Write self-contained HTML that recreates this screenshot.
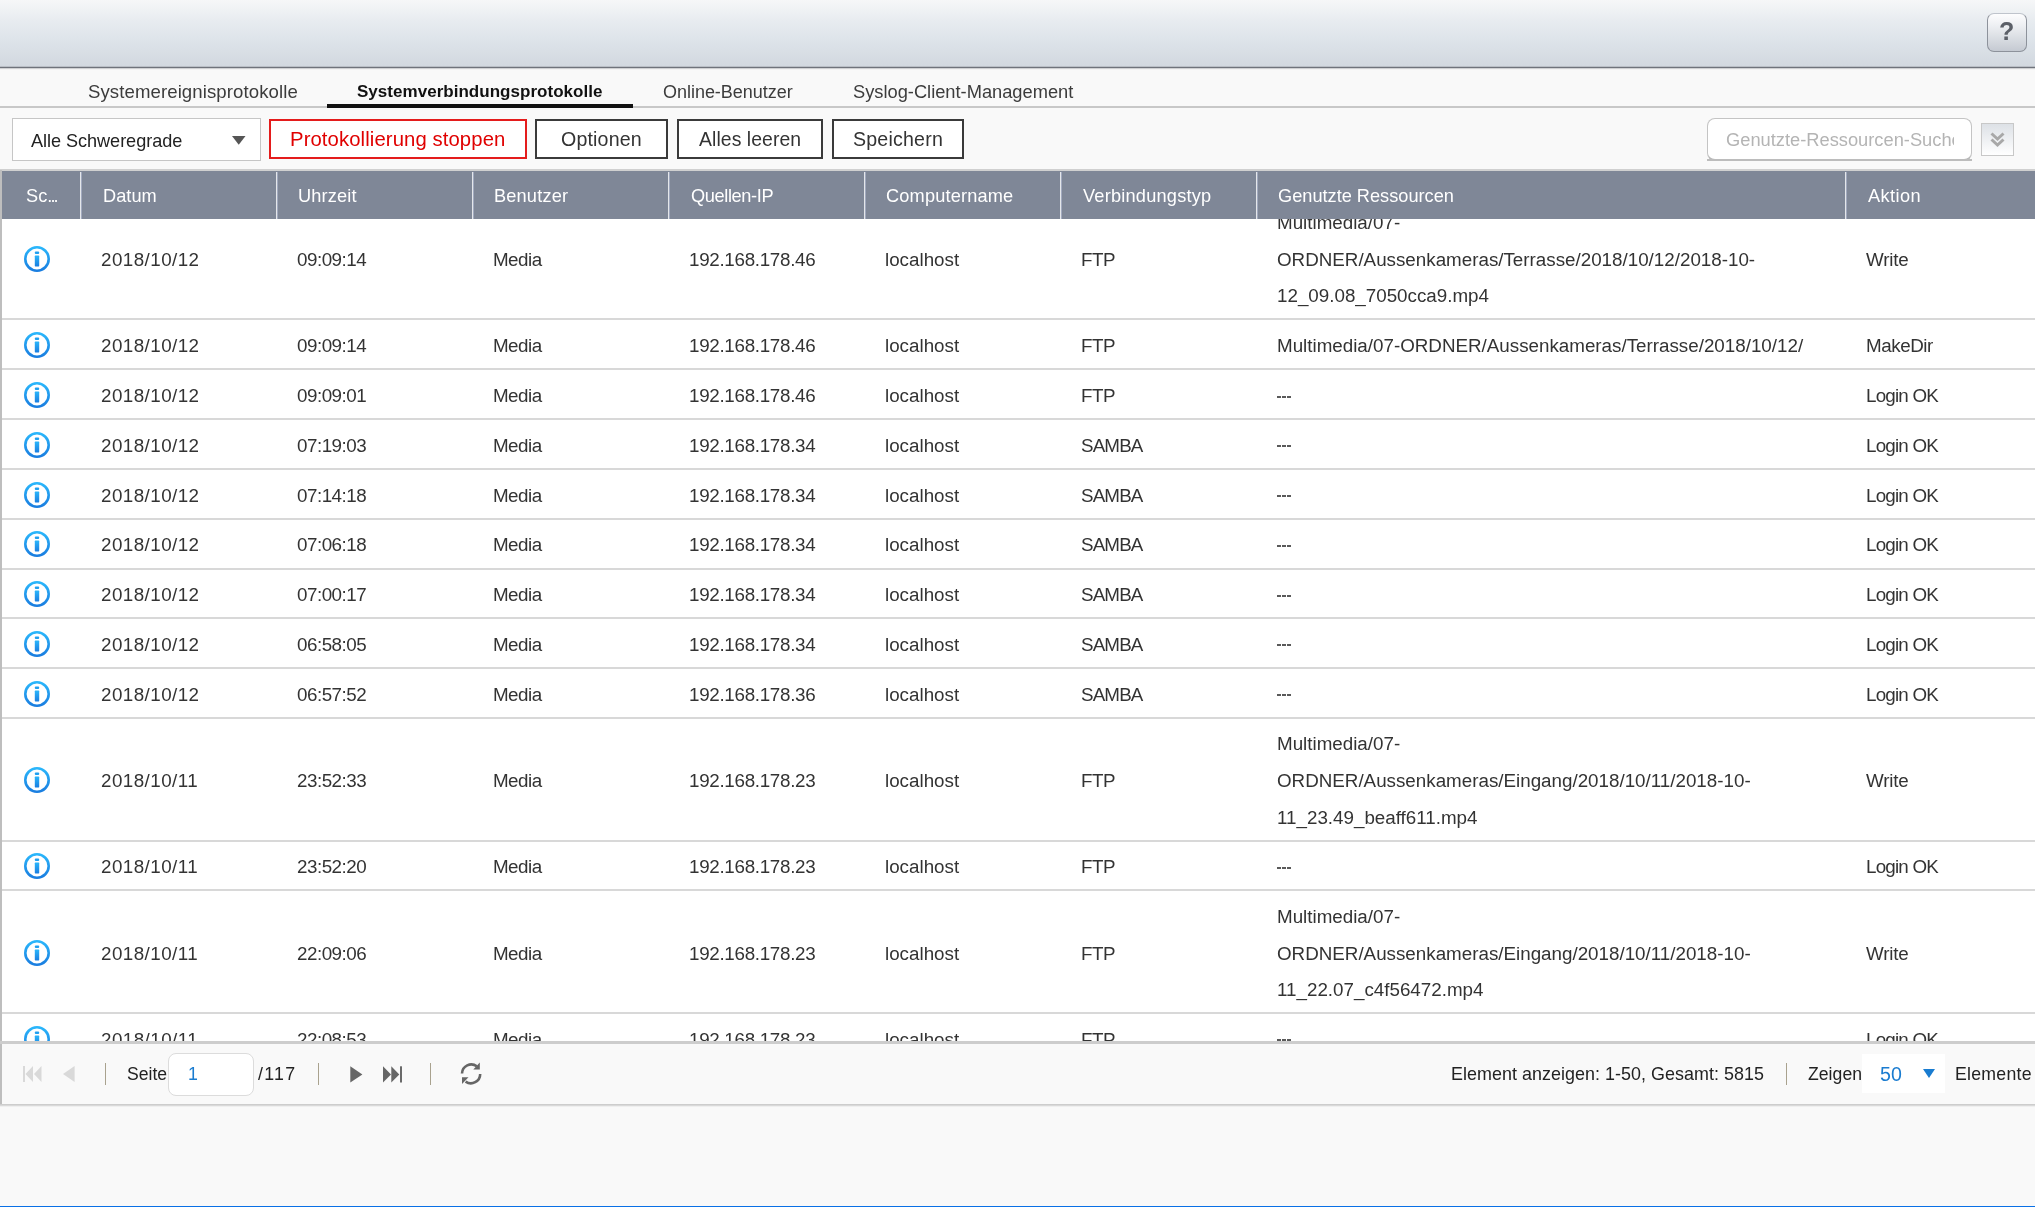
<!DOCTYPE html>
<html><head><meta charset="utf-8"><style>
*{box-sizing:border-box;margin:0;padding:0}
html,body{width:2035px;height:1207px;overflow:hidden;background:#f9f9f9;font-family:"Liberation Sans",sans-serif;color:#333}
.a{position:absolute}
.t{position:absolute;white-space:nowrap;will-change:transform}
svg{position:absolute;overflow:visible}
</style></head><body>
<div class="a" style="left:0px;top:0px;width:2035px;height:67px;background:linear-gradient(#f6f7f8,#e8ecf0 30%,#dfe5eb 55%,#d2d8df)"></div>
<div class="a" style="left:0px;top:66px;width:2035px;height:1px;background:#b9bec5"></div>
<div class="a" style="left:0px;top:67px;width:2035px;height:1px;background:#6f737b"></div>
<div class="a" style="left:0px;top:68px;width:2035px;height:1px;background:#cfd0d2"></div>
<div class="a" style="left:0px;top:69px;width:2035px;height:1px;background:#f3f3f3"></div>
<div class="a" style="left:1987px;top:13px;width:40px;height:39px;border:1.5px solid #8d929b;border-top-color:#bfc4cc;border-radius:7px;background:linear-gradient(#fdfdfe,#eef0f3 30%,#c5cad2)"></div>
<div class="t" id="help" style="left:1999.30px;top:16.34px;font-size:25px;line-height:30px;color:#5c6068;font-weight:bold;">?</div>
<div class="a" style="left:0px;top:106px;width:2035px;height:2px;background:#c8c8c8"></div>
<div class="a" style="left:327px;top:104px;width:306px;height:4px;background:#111"></div>
<div class="t" id="tab1" style="left:87.90px;top:80.66px;font-size:18.6px;line-height:22px;color:#3c3c3c;letter-spacing:0.087px;">Systemereignisprotokolle</div>
<div class="t" id="tab2" style="left:357.10px;top:82.21px;font-size:17.0px;line-height:20px;color:#111;font-weight:bold;letter-spacing:0.031px;">Systemverbindungsprotokolle</div>
<div class="t" id="tab3" style="left:663.10px;top:80.86px;font-size:18.0px;line-height:22px;color:#3c3c3c;letter-spacing:-0.029px;">Online-Benutzer</div>
<div class="t" id="tab4" style="left:852.80px;top:80.76px;font-size:18.3px;line-height:22px;color:#3c3c3c;letter-spacing:-0.009px;">Syslog-Client-Management</div>
<div class="a" style="left:12px;top:118px;width:249px;height:43px;border:1.5px solid #c6c6c6;background:#fff"></div>
<div class="t" id="sev" style="left:31.20px;top:130.13px;font-size:18.1px;line-height:22px;color:#222;letter-spacing:-0.038px;">Alle Schweregrade</div>
<svg style="left:232px;top:136px" width="14" height="9"><path d="M0 0H13.5L6.75 8.7Z" fill="#555"/></svg>
<div class="a" style="left:269px;top:119px;width:258px;height:40px;border:2px solid #e41c1c;background:#fff"></div>
<div class="t" id="b1" style="left:290.00px;top:126.97px;font-size:20.3px;line-height:24px;color:#e00000;letter-spacing:0.100px;">Protokollierung stoppen</div>
<div class="a" style="left:535px;top:119px;width:133px;height:40px;border:2px solid #3a3a3a;background:#fff"></div>
<div class="t" id="b2" style="left:561.40px;top:127.21px;font-size:19.6px;line-height:24px;color:#333;letter-spacing:0.171px;">Optionen</div>
<div class="a" style="left:677px;top:119px;width:146px;height:40px;border:2px solid #3a3a3a;background:#fff"></div>
<div class="t" id="b3" style="left:699.00px;top:127.78px;font-size:19.4px;line-height:23px;color:#333;letter-spacing:0.073px;">Alles leeren</div>
<div class="a" style="left:832px;top:119px;width:132px;height:40px;border:2px solid #3a3a3a;background:#fff"></div>
<div class="t" id="b4" style="left:853.10px;top:127.21px;font-size:19.6px;line-height:24px;color:#333;letter-spacing:0.200px;">Speichern</div>
<div class="a" style="left:1707px;top:118px;width:265px;height:43px;border:1.5px solid #c4c4c4;border-bottom:2px solid #b8b8b8;border-radius:8px;background:#fff"></div>
<div class="a" style="left:1707px;top:159px;width:265px;height:2px;background:#bcbcbc"></div>
<div class="a" style="left:1709px;top:120px;width:245px;height:38px;overflow:hidden"><div class="t" id="srch" style="left:16.50px;top:9.16px;font-size:18.3px;line-height:22px;color:#b4b4b4;">Genutzte-Ressourcen-Suche</div>
</div>
<div class="a" style="left:1981px;top:123px;width:33px;height:33px;border:1.5px solid #c8c8c8;background:linear-gradient(#dde1e6,#fff)"></div>
<svg style="left:1987px;top:129px" width="22" height="22"><path d="M4.5 4.5L10.5 10L16.5 4.5M4.5 10.5L10.5 16L16.5 10.5" fill="none" stroke="#a8a8a8" stroke-width="3"/></svg>
<div class="a" style="left:0px;top:169px;width:2035px;height:2px;background:#d0d0d0"></div>
<div class="a" style="left:0px;top:171px;width:2035px;height:872px;background:#fff"></div>
<div class="a" style="left:0px;top:171px;width:2035px;height:48px;background:#7f8797"></div>
<div class="a" style="left:80px;top:172px;width:1px;height:47px;background:#e4e6ea"></div>
<div class="a" style="left:81px;top:172px;width:1px;height:47px;background:#a2aabf"></div>
<div class="a" style="left:276px;top:172px;width:1px;height:47px;background:#e4e6ea"></div>
<div class="a" style="left:277px;top:172px;width:1px;height:47px;background:#a2aabf"></div>
<div class="a" style="left:472px;top:172px;width:1px;height:47px;background:#e4e6ea"></div>
<div class="a" style="left:473px;top:172px;width:1px;height:47px;background:#a2aabf"></div>
<div class="a" style="left:668px;top:172px;width:1px;height:47px;background:#e4e6ea"></div>
<div class="a" style="left:669px;top:172px;width:1px;height:47px;background:#a2aabf"></div>
<div class="a" style="left:864px;top:172px;width:1px;height:47px;background:#e4e6ea"></div>
<div class="a" style="left:865px;top:172px;width:1px;height:47px;background:#a2aabf"></div>
<div class="a" style="left:1060px;top:172px;width:1px;height:47px;background:#e4e6ea"></div>
<div class="a" style="left:1061px;top:172px;width:1px;height:47px;background:#a2aabf"></div>
<div class="a" style="left:1256px;top:172px;width:1px;height:47px;background:#e4e6ea"></div>
<div class="a" style="left:1257px;top:172px;width:1px;height:47px;background:#a2aabf"></div>
<div class="a" style="left:1845px;top:172px;width:1px;height:47px;background:#e4e6ea"></div>
<div class="a" style="left:1846px;top:172px;width:1px;height:47px;background:#a2aabf"></div>
<div class="t" id="h0" style="left:25.70px;top:185.39px;font-size:18.2px;line-height:22px;color:#fff;">Sc<span style="letter-spacing:-1.9px">...</span></div>
<div class="t" id="h1" style="left:103.30px;top:185.39px;font-size:18.2px;line-height:22px;color:#fff;letter-spacing:0.050px;">Datum</div>
<div class="t" id="h2" style="left:297.60px;top:185.39px;font-size:18.2px;line-height:22px;color:#fff;letter-spacing:0.167px;">Uhrzeit</div>
<div class="t" id="h3" style="left:494.20px;top:185.39px;font-size:18.2px;line-height:22px;color:#fff;letter-spacing:0.171px;">Benutzer</div>
<div class="t" id="h4" style="left:691.20px;top:185.39px;font-size:18.2px;line-height:22px;color:#fff;letter-spacing:-0.378px;">Quellen-IP</div>
<div class="t" id="h5" style="left:886.00px;top:185.39px;font-size:18.2px;line-height:22px;color:#fff;letter-spacing:0.164px;">Computername</div>
<div class="t" id="h6" style="left:1083.00px;top:185.39px;font-size:18.2px;line-height:22px;color:#fff;letter-spacing:0.215px;">Verbindungstyp</div>
<div class="t" id="h7" style="left:1278.40px;top:185.39px;font-size:18.2px;line-height:22px;color:#fff;">Genutzte Ressourcen</div>
<div class="t" id="h8" style="left:1868.30px;top:185.39px;font-size:18.2px;line-height:22px;color:#fff;letter-spacing:0.400px;">Aktion</div>
<div class="a" style="left:0;top:219px;width:2035px;height:822px;overflow:hidden"><div class="a" style="left:0;top:-219px;width:2035px;height:1207px">
<svg style="left:23px;top:245px" width="28" height="28" viewBox="0 0 28 28"><defs><linearGradient id="ig" x1="0" y1="0" x2="0" y2="1"><stop offset="0" stop-color="#2ab6fb"/><stop offset="1" stop-color="#1a7ee0"/></linearGradient></defs><circle cx="14" cy="14" r="11.7" fill="none" stroke="url(#ig)" stroke-width="2.6"/><rect x="11.8" y="6.4" width="4.4" height="2.7" rx="1" fill="#20a0f0"/><rect x="11.8" y="10.6" width="4.4" height="10.8" rx="0.6" fill="url(#ig)"/></svg><div class="t" id="t21" style="left:100.80px;top:247.89px;font-size:18.8px;line-height:23px;color:#333;letter-spacing:0.450px;">2018/10/12</div>
<div class="t" id="t22" style="left:296.70px;top:247.89px;font-size:18.8px;line-height:23px;color:#333;letter-spacing:-0.490px;">09:09:14</div>
<div class="t" id="t23" style="left:493.10px;top:247.89px;font-size:18.8px;line-height:23px;color:#333;letter-spacing:-0.520px;">Media</div>
<div class="t" id="t24" style="left:689.30px;top:247.89px;font-size:18.8px;line-height:23px;color:#333;letter-spacing:-0.300px;">192.168.178.46</div>
<div class="t" id="t25" style="left:884.70px;top:247.89px;font-size:18.8px;line-height:23px;color:#333;">localhost</div>
<div class="t" id="t26" style="left:1080.50px;top:247.89px;font-size:18.8px;line-height:23px;color:#333;letter-spacing:-0.500px;">FTP</div>
<div class="t" id="t27" style="left:1276.90px;top:211.29px;font-size:18.8px;line-height:23px;color:#333;">Multimedia/07-</div>
<div class="t" id="t28" style="left:1276.90px;top:247.89px;font-size:18.8px;line-height:23px;color:#333;">ORDNER/Aussenkameras/Terrasse/2018/10/12/2018-10-</div>
<div class="t" id="t29" style="left:1276.90px;top:284.49px;font-size:18.8px;line-height:23px;color:#333;">12_09.08_7050cca9.mp4</div>
<div class="t" id="t30" style="left:1866.30px;top:247.89px;font-size:18.8px;line-height:23px;color:#333;letter-spacing:-0.200px;">Write</div>
<div class="a" style="left:2px;top:318px;width:2033px;height:2px;background:#d8d8d8"></div>
<svg style="left:23px;top:331px" width="28" height="28" viewBox="0 0 28 28"><defs><linearGradient id="ig" x1="0" y1="0" x2="0" y2="1"><stop offset="0" stop-color="#2ab6fb"/><stop offset="1" stop-color="#1a7ee0"/></linearGradient></defs><circle cx="14" cy="14" r="11.7" fill="none" stroke="url(#ig)" stroke-width="2.6"/><rect x="11.8" y="6.4" width="4.4" height="2.7" rx="1" fill="#20a0f0"/><rect x="11.8" y="10.6" width="4.4" height="10.8" rx="0.6" fill="url(#ig)"/></svg><div class="t" id="t31" style="left:100.80px;top:334.19px;font-size:18.8px;line-height:23px;color:#333;letter-spacing:0.450px;">2018/10/12</div>
<div class="t" id="t32" style="left:296.70px;top:334.19px;font-size:18.8px;line-height:23px;color:#333;letter-spacing:-0.490px;">09:09:14</div>
<div class="t" id="t33" style="left:493.10px;top:334.19px;font-size:18.8px;line-height:23px;color:#333;letter-spacing:-0.520px;">Media</div>
<div class="t" id="t34" style="left:689.30px;top:334.19px;font-size:18.8px;line-height:23px;color:#333;letter-spacing:-0.300px;">192.168.178.46</div>
<div class="t" id="t35" style="left:884.70px;top:334.19px;font-size:18.8px;line-height:23px;color:#333;">localhost</div>
<div class="t" id="t36" style="left:1080.50px;top:334.19px;font-size:18.8px;line-height:23px;color:#333;letter-spacing:-0.500px;">FTP</div>
<div class="t" id="t37" style="left:1276.90px;top:334.19px;font-size:18.8px;line-height:23px;color:#333;">Multimedia/07-ORDNER/Aussenkameras/Terrasse/2018/10/12/</div>
<div class="t" id="t38" style="left:1866.30px;top:334.19px;font-size:18.8px;line-height:23px;color:#333;letter-spacing:-0.450px;">MakeDir</div>
<div class="a" style="left:2px;top:368px;width:2033px;height:2px;background:#d8d8d8"></div>
<svg style="left:23px;top:381px" width="28" height="28" viewBox="0 0 28 28"><defs><linearGradient id="ig" x1="0" y1="0" x2="0" y2="1"><stop offset="0" stop-color="#2ab6fb"/><stop offset="1" stop-color="#1a7ee0"/></linearGradient></defs><circle cx="14" cy="14" r="11.7" fill="none" stroke="url(#ig)" stroke-width="2.6"/><rect x="11.8" y="6.4" width="4.4" height="2.7" rx="1" fill="#20a0f0"/><rect x="11.8" y="10.6" width="4.4" height="10.8" rx="0.6" fill="url(#ig)"/></svg><div class="t" id="t39" style="left:100.80px;top:383.99px;font-size:18.8px;line-height:23px;color:#333;letter-spacing:0.450px;">2018/10/12</div>
<div class="t" id="t40" style="left:296.70px;top:383.99px;font-size:18.8px;line-height:23px;color:#333;letter-spacing:-0.490px;">09:09:01</div>
<div class="t" id="t41" style="left:493.10px;top:383.99px;font-size:18.8px;line-height:23px;color:#333;letter-spacing:-0.520px;">Media</div>
<div class="t" id="t42" style="left:689.30px;top:383.99px;font-size:18.8px;line-height:23px;color:#333;letter-spacing:-0.300px;">192.168.178.46</div>
<div class="t" id="t43" style="left:884.70px;top:383.99px;font-size:18.8px;line-height:23px;color:#333;">localhost</div>
<div class="t" id="t44" style="left:1080.50px;top:383.99px;font-size:18.8px;line-height:23px;color:#333;letter-spacing:-0.500px;">FTP</div>
<div class="a" style="left:1277px;top:396px;width:4px;height:2px;background:#5a5a5a"></div>
<div class="a" style="left:1282px;top:396px;width:4px;height:2px;background:#5a5a5a"></div>
<div class="a" style="left:1287px;top:396px;width:4px;height:2px;background:#5a5a5a"></div>
<div class="t" id="t45" style="left:1866.30px;top:383.99px;font-size:18.8px;line-height:23px;color:#333;letter-spacing:-0.790px;">Login OK</div>
<div class="a" style="left:2px;top:418px;width:2033px;height:2px;background:#d8d8d8"></div>
<svg style="left:23px;top:431px" width="28" height="28" viewBox="0 0 28 28"><defs><linearGradient id="ig" x1="0" y1="0" x2="0" y2="1"><stop offset="0" stop-color="#2ab6fb"/><stop offset="1" stop-color="#1a7ee0"/></linearGradient></defs><circle cx="14" cy="14" r="11.7" fill="none" stroke="url(#ig)" stroke-width="2.6"/><rect x="11.8" y="6.4" width="4.4" height="2.7" rx="1" fill="#20a0f0"/><rect x="11.8" y="10.6" width="4.4" height="10.8" rx="0.6" fill="url(#ig)"/></svg><div class="t" id="t46" style="left:100.80px;top:433.79px;font-size:18.8px;line-height:23px;color:#333;letter-spacing:0.450px;">2018/10/12</div>
<div class="t" id="t47" style="left:296.70px;top:433.79px;font-size:18.8px;line-height:23px;color:#333;letter-spacing:-0.490px;">07:19:03</div>
<div class="t" id="t48" style="left:493.10px;top:433.79px;font-size:18.8px;line-height:23px;color:#333;letter-spacing:-0.520px;">Media</div>
<div class="t" id="t49" style="left:689.30px;top:433.79px;font-size:18.8px;line-height:23px;color:#333;letter-spacing:-0.300px;">192.168.178.34</div>
<div class="t" id="t50" style="left:884.70px;top:433.79px;font-size:18.8px;line-height:23px;color:#333;">localhost</div>
<div class="t" id="t51" style="left:1080.50px;top:433.79px;font-size:18.8px;line-height:23px;color:#333;letter-spacing:-0.850px;">SAMBA</div>
<div class="a" style="left:1277px;top:445px;width:4px;height:2px;background:#5a5a5a"></div>
<div class="a" style="left:1282px;top:445px;width:4px;height:2px;background:#5a5a5a"></div>
<div class="a" style="left:1287px;top:445px;width:4px;height:2px;background:#5a5a5a"></div>
<div class="t" id="t52" style="left:1866.30px;top:433.79px;font-size:18.8px;line-height:23px;color:#333;letter-spacing:-0.790px;">Login OK</div>
<div class="a" style="left:2px;top:468px;width:2033px;height:2px;background:#d8d8d8"></div>
<svg style="left:23px;top:481px" width="28" height="28" viewBox="0 0 28 28"><defs><linearGradient id="ig" x1="0" y1="0" x2="0" y2="1"><stop offset="0" stop-color="#2ab6fb"/><stop offset="1" stop-color="#1a7ee0"/></linearGradient></defs><circle cx="14" cy="14" r="11.7" fill="none" stroke="url(#ig)" stroke-width="2.6"/><rect x="11.8" y="6.4" width="4.4" height="2.7" rx="1" fill="#20a0f0"/><rect x="11.8" y="10.6" width="4.4" height="10.8" rx="0.6" fill="url(#ig)"/></svg><div class="t" id="t53" style="left:100.80px;top:483.59px;font-size:18.8px;line-height:23px;color:#333;letter-spacing:0.450px;">2018/10/12</div>
<div class="t" id="t54" style="left:296.70px;top:483.59px;font-size:18.8px;line-height:23px;color:#333;letter-spacing:-0.490px;">07:14:18</div>
<div class="t" id="t55" style="left:493.10px;top:483.59px;font-size:18.8px;line-height:23px;color:#333;letter-spacing:-0.520px;">Media</div>
<div class="t" id="t56" style="left:689.30px;top:483.59px;font-size:18.8px;line-height:23px;color:#333;letter-spacing:-0.300px;">192.168.178.34</div>
<div class="t" id="t57" style="left:884.70px;top:483.59px;font-size:18.8px;line-height:23px;color:#333;">localhost</div>
<div class="t" id="t58" style="left:1080.50px;top:483.59px;font-size:18.8px;line-height:23px;color:#333;letter-spacing:-0.850px;">SAMBA</div>
<div class="a" style="left:1277px;top:495px;width:4px;height:2px;background:#5a5a5a"></div>
<div class="a" style="left:1282px;top:495px;width:4px;height:2px;background:#5a5a5a"></div>
<div class="a" style="left:1287px;top:495px;width:4px;height:2px;background:#5a5a5a"></div>
<div class="t" id="t59" style="left:1866.30px;top:483.59px;font-size:18.8px;line-height:23px;color:#333;letter-spacing:-0.790px;">Login OK</div>
<div class="a" style="left:2px;top:518px;width:2033px;height:2px;background:#d8d8d8"></div>
<svg style="left:23px;top:530px" width="28" height="28" viewBox="0 0 28 28"><defs><linearGradient id="ig" x1="0" y1="0" x2="0" y2="1"><stop offset="0" stop-color="#2ab6fb"/><stop offset="1" stop-color="#1a7ee0"/></linearGradient></defs><circle cx="14" cy="14" r="11.7" fill="none" stroke="url(#ig)" stroke-width="2.6"/><rect x="11.8" y="6.4" width="4.4" height="2.7" rx="1" fill="#20a0f0"/><rect x="11.8" y="10.6" width="4.4" height="10.8" rx="0.6" fill="url(#ig)"/></svg><div class="t" id="t60" style="left:100.80px;top:533.39px;font-size:18.8px;line-height:23px;color:#333;letter-spacing:0.450px;">2018/10/12</div>
<div class="t" id="t61" style="left:296.70px;top:533.39px;font-size:18.8px;line-height:23px;color:#333;letter-spacing:-0.490px;">07:06:18</div>
<div class="t" id="t62" style="left:493.10px;top:533.39px;font-size:18.8px;line-height:23px;color:#333;letter-spacing:-0.520px;">Media</div>
<div class="t" id="t63" style="left:689.30px;top:533.39px;font-size:18.8px;line-height:23px;color:#333;letter-spacing:-0.300px;">192.168.178.34</div>
<div class="t" id="t64" style="left:884.70px;top:533.39px;font-size:18.8px;line-height:23px;color:#333;">localhost</div>
<div class="t" id="t65" style="left:1080.50px;top:533.39px;font-size:18.8px;line-height:23px;color:#333;letter-spacing:-0.850px;">SAMBA</div>
<div class="a" style="left:1277px;top:545px;width:4px;height:2px;background:#5a5a5a"></div>
<div class="a" style="left:1282px;top:545px;width:4px;height:2px;background:#5a5a5a"></div>
<div class="a" style="left:1287px;top:545px;width:4px;height:2px;background:#5a5a5a"></div>
<div class="t" id="t66" style="left:1866.30px;top:533.39px;font-size:18.8px;line-height:23px;color:#333;letter-spacing:-0.790px;">Login OK</div>
<div class="a" style="left:2px;top:568px;width:2033px;height:2px;background:#d8d8d8"></div>
<svg style="left:23px;top:580px" width="28" height="28" viewBox="0 0 28 28"><defs><linearGradient id="ig" x1="0" y1="0" x2="0" y2="1"><stop offset="0" stop-color="#2ab6fb"/><stop offset="1" stop-color="#1a7ee0"/></linearGradient></defs><circle cx="14" cy="14" r="11.7" fill="none" stroke="url(#ig)" stroke-width="2.6"/><rect x="11.8" y="6.4" width="4.4" height="2.7" rx="1" fill="#20a0f0"/><rect x="11.8" y="10.6" width="4.4" height="10.8" rx="0.6" fill="url(#ig)"/></svg><div class="t" id="t67" style="left:100.80px;top:583.19px;font-size:18.8px;line-height:23px;color:#333;letter-spacing:0.450px;">2018/10/12</div>
<div class="t" id="t68" style="left:296.70px;top:583.19px;font-size:18.8px;line-height:23px;color:#333;letter-spacing:-0.490px;">07:00:17</div>
<div class="t" id="t69" style="left:493.10px;top:583.19px;font-size:18.8px;line-height:23px;color:#333;letter-spacing:-0.520px;">Media</div>
<div class="t" id="t70" style="left:689.30px;top:583.19px;font-size:18.8px;line-height:23px;color:#333;letter-spacing:-0.300px;">192.168.178.34</div>
<div class="t" id="t71" style="left:884.70px;top:583.19px;font-size:18.8px;line-height:23px;color:#333;">localhost</div>
<div class="t" id="t72" style="left:1080.50px;top:583.19px;font-size:18.8px;line-height:23px;color:#333;letter-spacing:-0.850px;">SAMBA</div>
<div class="a" style="left:1277px;top:595px;width:4px;height:2px;background:#5a5a5a"></div>
<div class="a" style="left:1282px;top:595px;width:4px;height:2px;background:#5a5a5a"></div>
<div class="a" style="left:1287px;top:595px;width:4px;height:2px;background:#5a5a5a"></div>
<div class="t" id="t73" style="left:1866.30px;top:583.19px;font-size:18.8px;line-height:23px;color:#333;letter-spacing:-0.790px;">Login OK</div>
<div class="a" style="left:2px;top:617px;width:2033px;height:2px;background:#d8d8d8"></div>
<svg style="left:23px;top:630px" width="28" height="28" viewBox="0 0 28 28"><defs><linearGradient id="ig" x1="0" y1="0" x2="0" y2="1"><stop offset="0" stop-color="#2ab6fb"/><stop offset="1" stop-color="#1a7ee0"/></linearGradient></defs><circle cx="14" cy="14" r="11.7" fill="none" stroke="url(#ig)" stroke-width="2.6"/><rect x="11.8" y="6.4" width="4.4" height="2.7" rx="1" fill="#20a0f0"/><rect x="11.8" y="10.6" width="4.4" height="10.8" rx="0.6" fill="url(#ig)"/></svg><div class="t" id="t74" style="left:100.80px;top:632.99px;font-size:18.8px;line-height:23px;color:#333;letter-spacing:0.450px;">2018/10/12</div>
<div class="t" id="t75" style="left:296.70px;top:632.99px;font-size:18.8px;line-height:23px;color:#333;letter-spacing:-0.490px;">06:58:05</div>
<div class="t" id="t76" style="left:493.10px;top:632.99px;font-size:18.8px;line-height:23px;color:#333;letter-spacing:-0.520px;">Media</div>
<div class="t" id="t77" style="left:689.30px;top:632.99px;font-size:18.8px;line-height:23px;color:#333;letter-spacing:-0.300px;">192.168.178.34</div>
<div class="t" id="t78" style="left:884.70px;top:632.99px;font-size:18.8px;line-height:23px;color:#333;">localhost</div>
<div class="t" id="t79" style="left:1080.50px;top:632.99px;font-size:18.8px;line-height:23px;color:#333;letter-spacing:-0.850px;">SAMBA</div>
<div class="a" style="left:1277px;top:644px;width:4px;height:2px;background:#5a5a5a"></div>
<div class="a" style="left:1282px;top:644px;width:4px;height:2px;background:#5a5a5a"></div>
<div class="a" style="left:1287px;top:644px;width:4px;height:2px;background:#5a5a5a"></div>
<div class="t" id="t80" style="left:1866.30px;top:632.99px;font-size:18.8px;line-height:23px;color:#333;letter-spacing:-0.790px;">Login OK</div>
<div class="a" style="left:2px;top:667px;width:2033px;height:2px;background:#d8d8d8"></div>
<svg style="left:23px;top:680px" width="28" height="28" viewBox="0 0 28 28"><defs><linearGradient id="ig" x1="0" y1="0" x2="0" y2="1"><stop offset="0" stop-color="#2ab6fb"/><stop offset="1" stop-color="#1a7ee0"/></linearGradient></defs><circle cx="14" cy="14" r="11.7" fill="none" stroke="url(#ig)" stroke-width="2.6"/><rect x="11.8" y="6.4" width="4.4" height="2.7" rx="1" fill="#20a0f0"/><rect x="11.8" y="10.6" width="4.4" height="10.8" rx="0.6" fill="url(#ig)"/></svg><div class="t" id="t81" style="left:100.80px;top:682.79px;font-size:18.8px;line-height:23px;color:#333;letter-spacing:0.450px;">2018/10/12</div>
<div class="t" id="t82" style="left:296.70px;top:682.79px;font-size:18.8px;line-height:23px;color:#333;letter-spacing:-0.490px;">06:57:52</div>
<div class="t" id="t83" style="left:493.10px;top:682.79px;font-size:18.8px;line-height:23px;color:#333;letter-spacing:-0.520px;">Media</div>
<div class="t" id="t84" style="left:689.30px;top:682.79px;font-size:18.8px;line-height:23px;color:#333;letter-spacing:-0.300px;">192.168.178.36</div>
<div class="t" id="t85" style="left:884.70px;top:682.79px;font-size:18.8px;line-height:23px;color:#333;">localhost</div>
<div class="t" id="t86" style="left:1080.50px;top:682.79px;font-size:18.8px;line-height:23px;color:#333;letter-spacing:-0.850px;">SAMBA</div>
<div class="a" style="left:1277px;top:694px;width:4px;height:2px;background:#5a5a5a"></div>
<div class="a" style="left:1282px;top:694px;width:4px;height:2px;background:#5a5a5a"></div>
<div class="a" style="left:1287px;top:694px;width:4px;height:2px;background:#5a5a5a"></div>
<div class="t" id="t87" style="left:1866.30px;top:682.79px;font-size:18.8px;line-height:23px;color:#333;letter-spacing:-0.790px;">Login OK</div>
<div class="a" style="left:2px;top:717px;width:2033px;height:2px;background:#d8d8d8"></div>
<svg style="left:23px;top:766px" width="28" height="28" viewBox="0 0 28 28"><defs><linearGradient id="ig" x1="0" y1="0" x2="0" y2="1"><stop offset="0" stop-color="#2ab6fb"/><stop offset="1" stop-color="#1a7ee0"/></linearGradient></defs><circle cx="14" cy="14" r="11.7" fill="none" stroke="url(#ig)" stroke-width="2.6"/><rect x="11.8" y="6.4" width="4.4" height="2.7" rx="1" fill="#20a0f0"/><rect x="11.8" y="10.6" width="4.4" height="10.8" rx="0.6" fill="url(#ig)"/></svg><div class="t" id="t88" style="left:100.80px;top:769.09px;font-size:18.8px;line-height:23px;color:#333;letter-spacing:0.450px;">2018/10/11</div>
<div class="t" id="t89" style="left:296.70px;top:769.09px;font-size:18.8px;line-height:23px;color:#333;letter-spacing:-0.490px;">23:52:33</div>
<div class="t" id="t90" style="left:493.10px;top:769.09px;font-size:18.8px;line-height:23px;color:#333;letter-spacing:-0.520px;">Media</div>
<div class="t" id="t91" style="left:689.30px;top:769.09px;font-size:18.8px;line-height:23px;color:#333;letter-spacing:-0.300px;">192.168.178.23</div>
<div class="t" id="t92" style="left:884.70px;top:769.09px;font-size:18.8px;line-height:23px;color:#333;">localhost</div>
<div class="t" id="t93" style="left:1080.50px;top:769.09px;font-size:18.8px;line-height:23px;color:#333;letter-spacing:-0.500px;">FTP</div>
<div class="t" id="t94" style="left:1276.90px;top:732.49px;font-size:18.8px;line-height:23px;color:#333;">Multimedia/07-</div>
<div class="t" id="t95" style="left:1276.90px;top:769.09px;font-size:18.8px;line-height:23px;color:#333;">ORDNER/Aussenkameras/Eingang/2018/10/11/2018-10-</div>
<div class="t" id="t96" style="left:1276.90px;top:805.69px;font-size:18.8px;line-height:23px;color:#333;">11_23.49_beaff611.mp4</div>
<div class="t" id="t97" style="left:1866.30px;top:769.09px;font-size:18.8px;line-height:23px;color:#333;letter-spacing:-0.200px;">Write</div>
<div class="a" style="left:2px;top:840px;width:2033px;height:2px;background:#d8d8d8"></div>
<svg style="left:23px;top:852px" width="28" height="28" viewBox="0 0 28 28"><defs><linearGradient id="ig" x1="0" y1="0" x2="0" y2="1"><stop offset="0" stop-color="#2ab6fb"/><stop offset="1" stop-color="#1a7ee0"/></linearGradient></defs><circle cx="14" cy="14" r="11.7" fill="none" stroke="url(#ig)" stroke-width="2.6"/><rect x="11.8" y="6.4" width="4.4" height="2.7" rx="1" fill="#20a0f0"/><rect x="11.8" y="10.6" width="4.4" height="10.8" rx="0.6" fill="url(#ig)"/></svg><div class="t" id="t98" style="left:100.80px;top:855.34px;font-size:18.8px;line-height:23px;color:#333;letter-spacing:0.450px;">2018/10/11</div>
<div class="t" id="t99" style="left:296.70px;top:855.34px;font-size:18.8px;line-height:23px;color:#333;letter-spacing:-0.490px;">23:52:20</div>
<div class="t" id="t100" style="left:493.10px;top:855.34px;font-size:18.8px;line-height:23px;color:#333;letter-spacing:-0.520px;">Media</div>
<div class="t" id="t101" style="left:689.30px;top:855.34px;font-size:18.8px;line-height:23px;color:#333;letter-spacing:-0.300px;">192.168.178.23</div>
<div class="t" id="t102" style="left:884.70px;top:855.34px;font-size:18.8px;line-height:23px;color:#333;">localhost</div>
<div class="t" id="t103" style="left:1080.50px;top:855.34px;font-size:18.8px;line-height:23px;color:#333;letter-spacing:-0.500px;">FTP</div>
<div class="a" style="left:1277px;top:867px;width:4px;height:2px;background:#5a5a5a"></div>
<div class="a" style="left:1282px;top:867px;width:4px;height:2px;background:#5a5a5a"></div>
<div class="a" style="left:1287px;top:867px;width:4px;height:2px;background:#5a5a5a"></div>
<div class="t" id="t104" style="left:1866.30px;top:855.34px;font-size:18.8px;line-height:23px;color:#333;letter-spacing:-0.790px;">Login OK</div>
<div class="a" style="left:2px;top:889px;width:2033px;height:2px;background:#d8d8d8"></div>
<svg style="left:23px;top:939px" width="28" height="28" viewBox="0 0 28 28"><defs><linearGradient id="ig" x1="0" y1="0" x2="0" y2="1"><stop offset="0" stop-color="#2ab6fb"/><stop offset="1" stop-color="#1a7ee0"/></linearGradient></defs><circle cx="14" cy="14" r="11.7" fill="none" stroke="url(#ig)" stroke-width="2.6"/><rect x="11.8" y="6.4" width="4.4" height="2.7" rx="1" fill="#20a0f0"/><rect x="11.8" y="10.6" width="4.4" height="10.8" rx="0.6" fill="url(#ig)"/></svg><div class="t" id="t105" style="left:100.80px;top:941.64px;font-size:18.8px;line-height:23px;color:#333;letter-spacing:0.450px;">2018/10/11</div>
<div class="t" id="t106" style="left:296.70px;top:941.64px;font-size:18.8px;line-height:23px;color:#333;letter-spacing:-0.490px;">22:09:06</div>
<div class="t" id="t107" style="left:493.10px;top:941.64px;font-size:18.8px;line-height:23px;color:#333;letter-spacing:-0.520px;">Media</div>
<div class="t" id="t108" style="left:689.30px;top:941.64px;font-size:18.8px;line-height:23px;color:#333;letter-spacing:-0.300px;">192.168.178.23</div>
<div class="t" id="t109" style="left:884.70px;top:941.64px;font-size:18.8px;line-height:23px;color:#333;">localhost</div>
<div class="t" id="t110" style="left:1080.50px;top:941.64px;font-size:18.8px;line-height:23px;color:#333;letter-spacing:-0.500px;">FTP</div>
<div class="t" id="t111" style="left:1276.90px;top:905.04px;font-size:18.8px;line-height:23px;color:#333;">Multimedia/07-</div>
<div class="t" id="t112" style="left:1276.90px;top:941.64px;font-size:18.8px;line-height:23px;color:#333;">ORDNER/Aussenkameras/Eingang/2018/10/11/2018-10-</div>
<div class="t" id="t113" style="left:1276.90px;top:978.24px;font-size:18.8px;line-height:23px;color:#333;">11_22.07_c4f56472.mp4</div>
<div class="t" id="t114" style="left:1866.30px;top:941.64px;font-size:18.8px;line-height:23px;color:#333;letter-spacing:-0.200px;">Write</div>
<div class="a" style="left:2px;top:1012px;width:2033px;height:2px;background:#d8d8d8"></div>
<svg style="left:23px;top:1025px" width="28" height="28" viewBox="0 0 28 28"><defs><linearGradient id="ig" x1="0" y1="0" x2="0" y2="1"><stop offset="0" stop-color="#2ab6fb"/><stop offset="1" stop-color="#1a7ee0"/></linearGradient></defs><circle cx="14" cy="14" r="11.7" fill="none" stroke="url(#ig)" stroke-width="2.6"/><rect x="11.8" y="6.4" width="4.4" height="2.7" rx="1" fill="#20a0f0"/><rect x="11.8" y="10.6" width="4.4" height="10.8" rx="0.6" fill="url(#ig)"/></svg><div class="t" id="t115" style="left:100.80px;top:1027.99px;font-size:18.8px;line-height:23px;color:#333;letter-spacing:0.450px;">2018/10/11</div>
<div class="t" id="t116" style="left:296.70px;top:1027.99px;font-size:18.8px;line-height:23px;color:#333;letter-spacing:-0.490px;">22:08:53</div>
<div class="t" id="t117" style="left:493.10px;top:1027.99px;font-size:18.8px;line-height:23px;color:#333;letter-spacing:-0.520px;">Media</div>
<div class="t" id="t118" style="left:689.30px;top:1027.99px;font-size:18.8px;line-height:23px;color:#333;letter-spacing:-0.300px;">192.168.178.23</div>
<div class="t" id="t119" style="left:884.70px;top:1027.99px;font-size:18.8px;line-height:23px;color:#333;">localhost</div>
<div class="t" id="t120" style="left:1080.50px;top:1027.99px;font-size:18.8px;line-height:23px;color:#333;letter-spacing:-0.500px;">FTP</div>
<div class="a" style="left:1277px;top:1039px;width:4px;height:2px;background:#5a5a5a"></div>
<div class="a" style="left:1282px;top:1039px;width:4px;height:2px;background:#5a5a5a"></div>
<div class="a" style="left:1287px;top:1039px;width:4px;height:2px;background:#5a5a5a"></div>
<div class="t" id="t121" style="left:1866.30px;top:1027.99px;font-size:18.8px;line-height:23px;color:#333;letter-spacing:-0.790px;">Login OK</div>
</div></div>
<div class="a" style="left:0px;top:170px;width:2px;height:934px;background:#bebebe"></div>
<div class="a" style="left:0px;top:1041px;width:2035px;height:3px;background:#cdcdcd"></div>
<div class="a" style="left:2px;top:1044px;width:2033px;height:60px;background:#f9f9f9"></div>
<div class="a" style="left:0px;top:1104px;width:2035px;height:1px;background:#cdcdcd"></div>
<div class="a" style="left:0px;top:1105px;width:2035px;height:1px;background:#d9d9d9"></div>
<div class="a" style="left:0px;top:1106px;width:2035px;height:1px;background:#efefef"></div>
<svg style="left:23px;top:1066px" width="20" height="17"><rect x="0" y="0" width="2" height="16" fill="#d9d9d9"/><path d="M10 0V16L2.5 8Z M18.5 0V16L11 8Z" fill="#d9d9d9"/></svg>
<svg style="left:63px;top:1066px" width="13" height="17"><path d="M11.6 0V16L0 8Z" fill="#d9d9d9"/></svg>
<div class="a" style="left:105px;top:1063px;width:1px;height:22px;background:#a9a28e"></div>
<div class="a" style="left:318px;top:1063px;width:1px;height:22px;background:#a9a28e"></div>
<div class="a" style="left:430px;top:1063px;width:1px;height:22px;background:#a9a28e"></div>
<div class="a" style="left:1786px;top:1063px;width:1px;height:22px;background:#a9a28e"></div>
<div class="t" id="pg1" style="left:126.70px;top:1064.40px;font-size:17.6px;line-height:21px;color:#222;">Seite</div>
<div class="a" style="left:168px;top:1053px;width:86px;height:43px;border:1px solid #dcdcdc;border-radius:8px;background:#fff"></div>
<div class="t" id="pg2" style="left:187.60px;top:1064.33px;font-size:17.8px;line-height:21px;color:#1a7cd0;">1</div>
<div class="t" id="pg3" style="left:257.80px;top:1064.33px;font-size:17.8px;line-height:21px;color:#222;letter-spacing:1.267px;">/117</div>
<svg style="left:350px;top:1066px" width="14" height="17"><path d="M0.3 0.3V16.5L12.4 8.4Z" fill="#666"/></svg>
<svg style="left:383px;top:1066px" width="20" height="17"><path d="M0 0.3V16.5L8 8.4Z M8.3 0.3V16.5L16.3 8.4Z" fill="#666"/><rect x="17" y="0.3" width="2" height="16.2" fill="#6a6a6a"/></svg>
<svg style="left:450px;top:1055px" width="45" height="40" viewBox="0 0 45 40"><path d="M12 18.5A9.3 9.3 0 0 1 26.8 11.3" fill="none" stroke="#666" stroke-width="2.6"/><path d="M23.3 14.6H29.8V7.4Z" fill="#666"/><path d="M30.2 19A9.3 9.3 0 0 1 15.6 26.6" fill="none" stroke="#666" stroke-width="2.6"/><path d="M18.5 22.2H12V29Z" fill="#666"/></svg>
<div class="t" id="pg4" style="left:1450.50px;top:1064.30px;font-size:17.9px;line-height:21px;color:#222;letter-spacing:0.046px;">Element anzeigen: 1-50, Gesamt: 5815</div>
<div class="t" id="pg5" style="left:1807.80px;top:1064.40px;font-size:17.6px;line-height:21px;color:#222;letter-spacing:0.040px;">Zeigen</div>
<div class="a" style="left:1862px;top:1054px;width:83px;height:39px;background:#fff"></div>
<div class="t" id="pg6" style="left:1879.70px;top:1062.21px;font-size:19.6px;line-height:24px;color:#1a7cd0;">50</div>
<svg style="left:1923px;top:1069px" width="13" height="9"><path d="M0 0H12L6 9Z" fill="#1a7cd0"/></svg>
<div class="t" id="pg7" style="left:1955.20px;top:1064.37px;font-size:17.7px;line-height:21px;color:#222;letter-spacing:0.257px;">Elemente</div>
<div class="a" style="left:0px;top:1206px;width:2035px;height:1px;background:#0a70e6"></div>
</body></html>
